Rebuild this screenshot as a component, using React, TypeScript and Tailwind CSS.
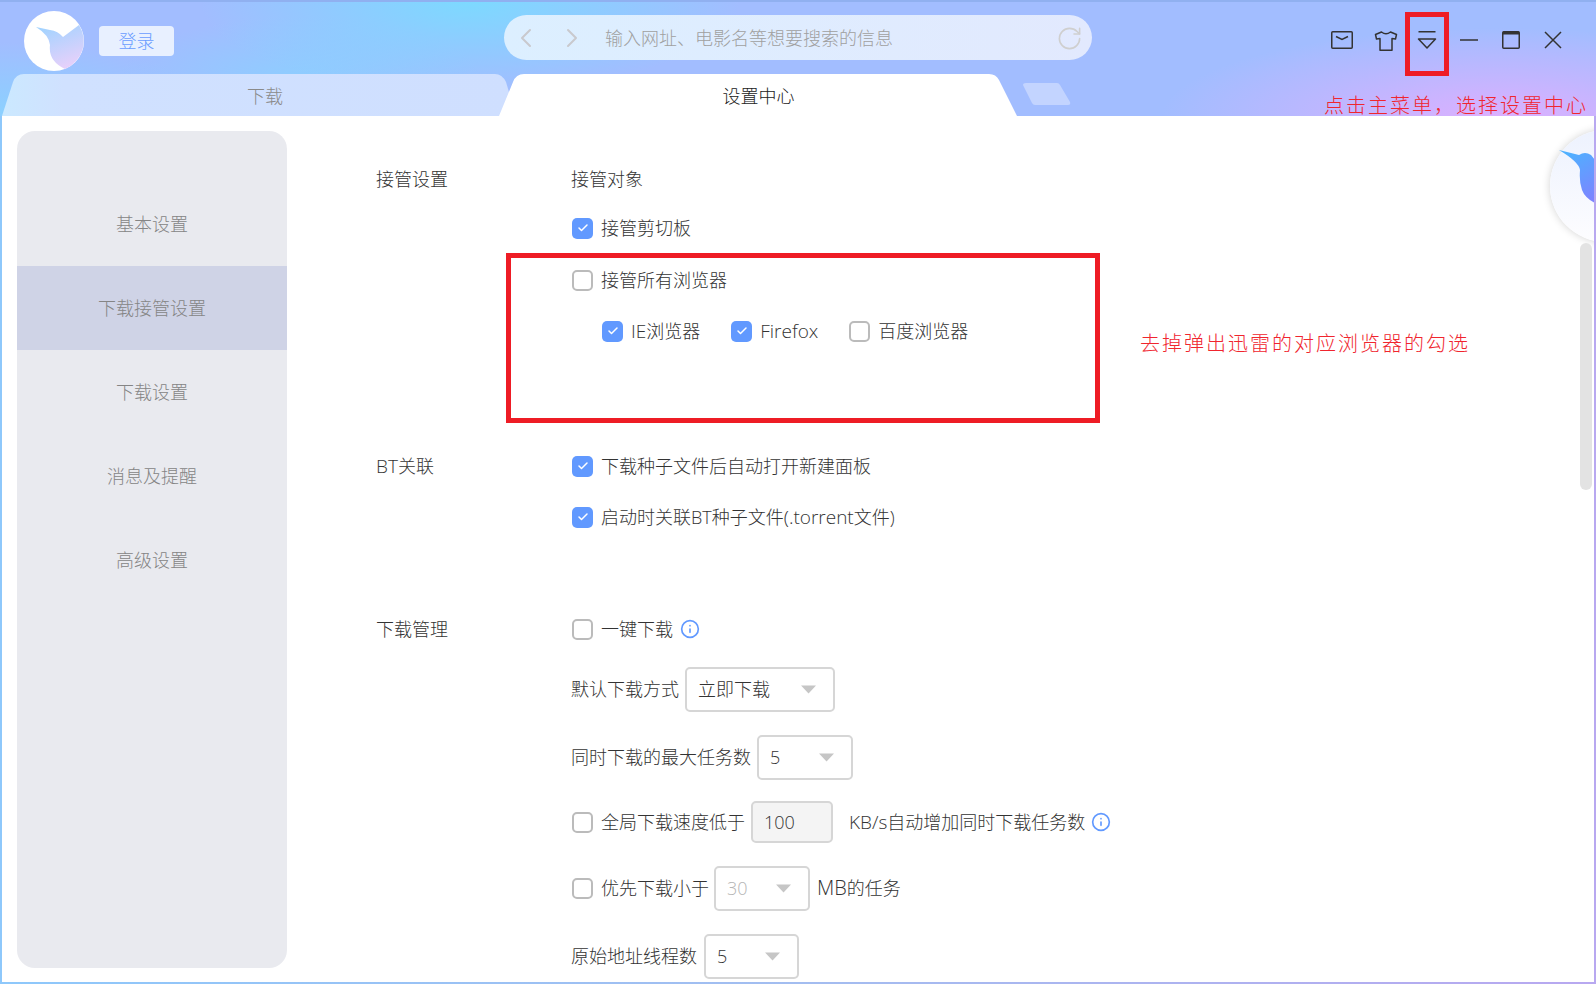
import { Check, ChevronLeft, ChevronRight, Info, RotateCw } from 'lucide-react';

const MENU = ['基本设置', '下载接管设置', '下载设置', '消息及提醒', '高级设置'];

const Box = ({ on }: { on?: boolean }) =>
  on ? (
    <span className="ml-[1px] flex h-[21px] w-[21px] shrink-0 items-center justify-center rounded-[5px] bg-[#6199ff]">
      <Check size={12} strokeWidth={3} className="text-white" />
    </span>
  ) : (
    <span className="ml-[1px] h-[21px] w-[21px] shrink-0 rounded-[5px] border-2 border-[#bbbbbb] bg-white" />
  );

const Opt = ({ on, children }: { on?: boolean; children: React.ReactNode }) => (
  <span className="flex items-center gap-[8px]">
    <Box on={on} />
    <span className="whitespace-nowrap">{children}</span>
  </span>
);

const Select = ({ value, width, muted }: { value: string; width: string; muted?: boolean }) => (
  <span className={`flex h-[45px] shrink-0 items-center justify-between rounded-[5px] border-2 border-[#d6d6d6] bg-white pl-[11px] pr-4 ${width}`}>
    <span className={muted ? 'text-[#b5b5b5]' : ''}>{value}</span>
    <svg width="17" height="9" viewBox="0 0 17 9">
      <path d="M1 0.5H16L8.5 8.5Z" fill="#c6c6c6" />
    </svg>
  </span>
);

const Logo = () => (
  <svg width="60" height="60" viewBox="0 0 60 60" className="shrink-0">
    <defs>
      <linearGradient id="birdA" x1="0.3" y1="0" x2="0.7" y2="1">
        <stop offset="0" stopColor="#a3d3ff" />
        <stop offset="1" stopColor="#ead0fa" />
      </linearGradient>
    </defs>
    <circle cx="30" cy="30" r="30" fill="#ffffff" />
    <path d="M12 16L26 19Q34 20 39 26L55 14A30 30 0 0 1 41 58Q24 50 26 34Q25 24 12 16Z" fill="url(#birdA)" />
  </svg>
);

export default function App() {
  return (
    <div className="relative h-[984px] w-[1596px] overflow-hidden bg-[linear-gradient(90deg,#8ec8fb,#a3bdf0_50%,#b8a8f0)] font-['Open_Sans','Noto_Sans_CJK_SC',sans-serif] text-[18px] font-light leading-[24px] text-[#333333]">
      {/* Title bar + tabs */}
      <div className="h-[116px] border-t-2 border-[#90b0f0] bg-[#a2bdff] bg-[radial-gradient(ellipse_270px_90px_at_470px_0px,#7dd9ff,transparent),radial-gradient(ellipse_180px_60px_at_300px_75px,#8ecdff,transparent),radial-gradient(ellipse_220px_70px_at_0px_110px,#8cd0ff,transparent),radial-gradient(ellipse_340px_90px_at_1500px_116px,#dcb0ff,transparent)]">
        <div className="flex h-[72px] items-start">
          <div className="ml-[24px] mt-[9px]">
            <Logo />
          </div>
          <button className="ml-[15px] mt-[24px] flex h-[30px] w-[75px] items-center justify-center rounded-[4px] bg-[#e8f0ff] text-[#6a9cff]">
            登录
          </button>
          <div className="ml-[330px] mt-[13px] flex h-[45px] w-[588px] items-center rounded-full bg-[linear-gradient(90deg,#dcefff,#e2e9fe)] pl-[6px] pr-[9px]">
            <ChevronLeft size={32} strokeWidth={1.5} className="text-[#c9c9cd]" />
            <ChevronRight size={32} strokeWidth={1.5} className="ml-[14px] text-[#c9c9cd]" />
            <span className="ml-[17px] text-[#a0a0a0]">输入网址、电影名等想要搜索的信息</span>
            <RotateCw size={27} strokeWidth={1.4} className="ml-auto mt-[2px] text-[#cfcfcf]" />
          </div>
          <div className="ml-[239px] mt-[29px] flex items-start text-[#333333]">
            <svg width="22" height="18" viewBox="0 0 22 18" fill="none" stroke="currentColor" strokeWidth="1.5">
              <rect x="0.75" y="0.75" width="20.5" height="16.5" rx="1" />
              <path d="M5 5.5L11 8.5L17 5.5" />
            </svg>
            <svg width="24" height="20" viewBox="0 0 24 20" fill="none" stroke="currentColor" strokeWidth="1.5" className="ml-[21px]">
              <path d="M7.5 1L1.5 3.5L2.5 8L6 7.5V19.2H18V7.5L21.5 8L22.5 3.5L16.5 1Q12 4.5 7.5 1Z" strokeLinejoin="round" />
            </svg>
            <svg width="20" height="18" viewBox="0 0 20 18" fill="none" stroke="currentColor" strokeWidth="1.5" className="ml-[19px]">
              <path d="M1.5 0.75H18.5" />
              <path d="M1.5 8L18.5 8L10 17Z" strokeLinejoin="round" />
            </svg>
            <svg width="18" height="18" viewBox="0 0 18 18" fill="none" stroke="currentColor" strokeWidth="1.5" className="ml-[23px]">
              <path d="M0 9H18" />
            </svg>
            <svg width="18" height="18" viewBox="0 0 18 18" fill="none" stroke="currentColor" strokeWidth="1.5" className="ml-[24px]">
              <rect x="0.75" y="0.75" width="16.5" height="16.5" rx="1" />
              <path d="M1 2H17" strokeWidth="3" />
            </svg>
            <svg width="18" height="18" viewBox="0 0 18 18" fill="none" stroke="currentColor" strokeWidth="1.5" className="ml-[24px]">
              <path d="M1 1L17 17M17 1L1 17" />
            </svg>
          </div>
        </div>
        <div className="flex h-[42px] items-start pl-[2px]">
          <div className="flex h-[42px] w-[514px] shrink-0 items-center justify-center bg-[linear-gradient(90deg,#cbe9ff,#d0e1ff_12%,#cfdfff)] pl-[12px] pt-[2px] text-[#8a8a8a] [clip-path:path('M0_42L11_8Q14_0_22_0L493_0Q500_0_504_8L514_42Z')]">
            下载
          </div>
          <div className="ml-[-17px] flex h-[42px] w-[519px] shrink-0 items-center justify-center bg-white pt-[2px] text-[#222222] [clip-path:path('M0_42L14_8Q17_0_25_0L490_0Q497_0_500_6L518_42Z')]">
            设置中心
          </div>
          <div className="ml-[5px] mt-[9px] h-[22px] w-[48px] shrink-0 bg-[#c3d4ff] [clip-path:path('M0_2Q0_0_3_0L34_0Q36_0_37_2L47_19Q48_22_45_22L12_22Q10_22_9_20Z')]" />
        </div>
      </div>

      {/* Body */}
      <div className="relative mx-[2px] flex h-[866px] overflow-hidden bg-white">
        <nav className="ml-[15px] mt-[15px] h-[837px] w-[270px] shrink-0 overflow-hidden rounded-[18px] bg-[#e9eaef] pt-[51px] text-[#858585]">
          {MENU.map((m, i) => (
            <div key={m} className={`flex h-[84px] items-center justify-center ${i === 1 ? 'bg-[#cfd3e6]' : ''}`}>
              {m}
            </div>
          ))}
        </nav>

        <div className="ml-[89px] pt-[51px]">
          {/* 接管设置 */}
          <div className="flex">
            <div className="h-6 w-[195px] leading-6">接管设置</div>
            <div>
              <div className="flex h-6 items-center">接管对象</div>
              <div className="mt-[25px] flex h-6 items-center">
                <Opt on>接管剪切板</Opt>
              </div>
              <div className="mt-[28px] flex h-6 items-center">
                <Opt>接管所有浏览器</Opt>
              </div>
              <div className="ml-[30px] mt-[27px] flex h-6 items-center">
                <Opt on>
                  <span className="text-[19px]">IE</span>浏览器
                </Opt>
                <span className="ml-[30px]">
                  <Opt on>
                    <span className="text-[19px]">Firefox</span>
                  </Opt>
                </span>
                <span className="ml-[30px]">
                  <Opt>百度浏览器</Opt>
                </span>
              </div>
            </div>
          </div>

          {/* BT关联 */}
          <div className="mt-[111px] flex">
            <div className="h-6 w-[195px] leading-6">
              <span className="text-[19px]">BT</span>关联
            </div>
            <div>
              <div className="flex h-6 items-center">
                <Opt on>下载种子文件后自动打开新建面板</Opt>
              </div>
              <div className="mt-[27px] flex h-6 items-center">
                <Opt on>
                  启动时关联BT种子文件<span className="text-[19px]">(.torrent</span>文件)
                </Opt>
              </div>
            </div>
          </div>

          {/* 下载管理 */}
          <div className="mt-[88px] flex">
            <div className="h-6 w-[195px] leading-6">下载管理</div>
            <div>
              <div className="flex h-6 items-center gap-[7px]">
                <Opt>一键下载</Opt>
                <Info size={20} strokeWidth={2} className="text-[#6199ff]" />
              </div>
              <div className="mt-[36px] flex h-6 items-center gap-[6px]">
                默认下载方式
                <Select value="立即下载" width="w-[150px]" />
              </div>
              <div className="mt-[44px] flex h-6 items-center gap-[6px]">
                同时下载的最大任务数
                <Select value="5" width="w-[96px]" />
              </div>
              <div className="mt-[41px] flex h-6 items-center gap-[6px]">
                <Opt>全局下载速度低于</Opt>
                <input
                  readOnly
                  value="100"
                  className="h-[42px] w-[82px] rounded-[5px] border-2 border-[#d6d6d6] bg-[#f4f4f4] pl-[11px] outline-none"
                />
                <span className="ml-[10px] whitespace-nowrap">
                  <span className="text-[19px]">KB/s</span>自动增加同时下载任务数
                </span>
                <Info size={20} strokeWidth={2} className="text-[#6199ff]" />
              </div>
              <div className="mt-[42px] flex h-6 items-center gap-[5px]">
                <Opt>优先下载小于</Opt>
                <Select value="30" width="w-[96px]" muted />
                <span className="ml-[2px] whitespace-nowrap">
                  <span className="text-[20px]">MB</span>的任务
                </span>
              </div>
              <div className="mt-[44px] flex h-6 items-center gap-[7px]">
                原始地址线程数
                <Select value="5" width="w-[95px]" />
              </div>
            </div>
          </div>
        </div>

        {/* Floating bird button */}
        <div className="absolute left-[1548px] top-[14px] h-[112px] w-[112px] rounded-full bg-[linear-gradient(180deg,#edf2fe,#fdfdff)] shadow-[0_0_8px_rgba(0,0,0,0.18)]">
          <svg width="36" height="54" viewBox="0 0 36 54" className="ml-[9px] mt-[20px]">
            <defs>
              <linearGradient id="birdB" x1="0.4" y1="0" x2="0.8" y2="1">
                <stop offset="0" stopColor="#4fb0ff" />
                <stop offset="1" stopColor="#7d84ff" />
              </linearGradient>
            </defs>
            <path d="M0 0L20 5Q26 1 32 5L36 10V53Q26 48 23 40Q20 32 21 20Q20 12 0 0Z" fill="url(#birdB)" />
          </svg>
        </div>

        {/* Scrollbar */}
        <div className="absolute right-[2px] top-[127px] h-[247px] w-3 rounded-full bg-[#e3e3e3]" />
      </div>

      {/* Red annotations */}
      <div className="absolute left-[1405px] top-[12px] h-[64px] w-[44px] border-[5px] border-[#ee1c25]" />
      <div className="absolute left-[1324px] top-[94px] whitespace-nowrap text-[20px] font-light leading-[24px] tracking-[2px] text-[#f0252e]">
        点击主菜单，选择设置中心
      </div>
      <div className="absolute left-[506px] top-[253px] h-[170px] w-[594px] border-[5px] border-[#ee1c25]" />
      <div className="absolute left-[1140px] top-[331px] whitespace-nowrap text-[20px] font-light leading-[26px] tracking-[2px] text-[#f0252e]">
        去掉弹出迅雷的对应浏览器的勾选
      </div>
    </div>
  );
}
